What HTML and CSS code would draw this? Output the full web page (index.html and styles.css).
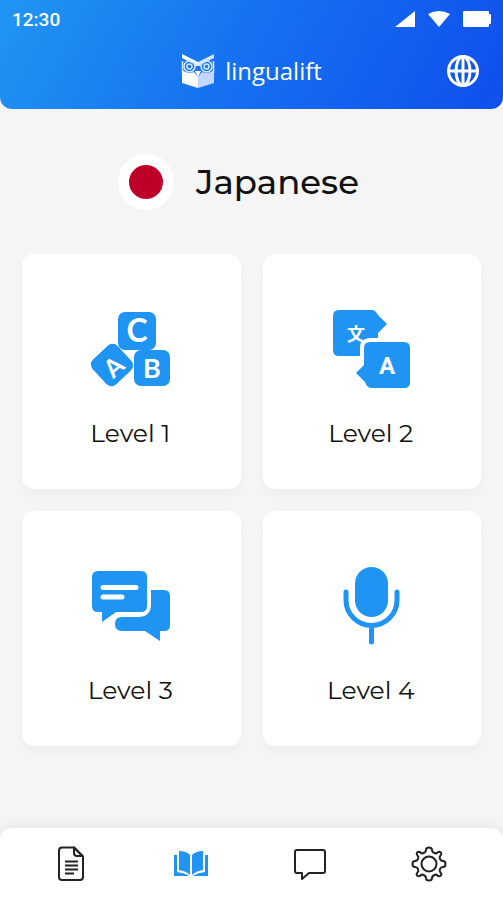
FILE: index.html
```html
<!DOCTYPE html>
<html lang="en">
  <head>
    <meta charset="UTF-8" />
    <meta name="viewport" content="width=device-width, initial-scale=1.0" />
    <title>LinguaLift</title>
    <link rel="stylesheet" href="styles.css">
  </head>
  <body>
    <header class="header">
      <div class="status-bar">
        <span class="time">12:30</span>
        <div class="status-icons">
          <svg width="20" height="16" viewBox="0 0 20 16"><path d="M20 0v16H0z" /></svg>
          <svg width="22" height="16" viewBox="0 0 22 16"><path d="M0 3Q11-3 22 3L11 16z" /></svg>
          <svg width="28" height="16" viewBox="0 0 28 16"><path d="M1 0h24q1 0 1 1v2h1q1 0 1 1v8q0 1-1 1h-1v2q0 1-1 1H1q-1 0-1-1V1q0-1 1-1z" /></svg>
        </div>
      </div>

      <div class="top-bar">
        <a href="#" class="logo">
          <svg width="34" height="36" viewBox="0 0 34 36">
            <path fill="#fff" d="M1 17q6 5 12 2l4 5v11L1 30z" />
            <path fill="#c3d8ff" d="M33 17q-6 5-12 2l-4 5v11l16-5z" />
            <path fill="#fff" d="M1 1l16 8v4L1 5z" />
            <path fill="#d5e5ff" d="M33 1L17 9v4l16-8z" />
            <g fill="none" stroke="#d5e5ff" stroke-width="1.5">
              <circle cx="8.500" cy="13.500" r="5.500" />
              <circle cx="25.500" cy="13.500" r="5.500" />
              <circle cx="8.500" cy="13.500" r="2.500" />
              <circle cx="25.500" cy="13.500" r="2.500" />
              <path d="M14 13q3-2 6 0M1.500 8v12M32.500 8v12" />
            </g>
            <path fill="#fff" d="M14 18h6l-3 6z" />
          </svg>
          <span>lingualift</span>
        </a>
        <button type="button" class="globe-btn" aria-label="Change language">
          <svg width="32" height="32" viewBox="0 0 32 32">
            <circle cx="16" cy="16" r="14.500" />
            <ellipse cx="16" cy="16" rx="7" ry="14.500" />
            <path d="M2 16h28M16 2v28" />
          </svg>
        </button>
      </div>
    </header>

    <main class="content">
      <div class="language">
        <span class="flag"></span>
        <h1>Japanese</h1>
      </div>

      <div class="levels">
        <a href="#" class="card">
          <svg width="80" height="80" viewBox="0 0 80 80">
            <rect x="28" y="3" width="38" height="38" rx="7" />
            <rect x="44" y="41" width="36" height="36" rx="7" />
            <rect x="5" y="39" width="34" height="34" rx="7" transform="rotate(-43 22 56)" />
            <g class="letter">
              <text x="47" y="33" font-size="32">C</text>
              <text x="62" y="69" font-size="27">B</text>
              <text x="23" y="67" font-size="25" transform="rotate(-42 23 57)">A</text>
            </g>
          </svg>
          <span>Level 1</span>
        </a>

        <a href="#" class="card">
          <svg width="80" height="80" viewBox="0 0 80 80">
            <path d="M8 1h33q3 0 6 5l9 9-9 9v23H8q-6 0-6-6V7q0-6 6-6z" />
            <text class="kanji" x="25" y="32" font-size="18">文</text>
            <path stroke="#fff" stroke-width="8" d="M39 33h34q6 0 6 6v34q0 6-6 6H41q-5 0-7-6l-9-9 8-8V39q0-6 6-6z" />
            <path d="M39 33h34q6 0 6 6v34q0 6-6 6H41q-5 0-7-6l-9-9 8-8V39q0-6 6-6z" />
            <text class="letter-a" x="56" y="65" font-size="24">A</text>
          </svg>
          <span>Level 2</span>
        </a>

        <a href="#" class="card">
          <svg width="80" height="80" viewBox="0 0 80 80">
            <path d="M8 5h43q6 0 6 6v29q0 6-6 6H26L12 56V46H8q-6 0-6-6V11q0-6 6-6z" />
            <path d="M61 24h13q6 0 6 6v29q0 6-6 6h-4v10L55 65H32q-7 0-7-7t7-7h16q13 0 13-13z" />
            <path class="lines" d="M13 21.500h33M13 31h19" />
          </svg>
          <span>Level 3</span>
        </a>

        <a href="#" class="card">
          <svg width="80" height="80" viewBox="0 0 80 80">
            <rect x="24" y="1" width="33" height="50" rx="16.500" />
            <path class="stand" d="M15 26v8a25.500 25.500 0 0 0 51 0v-8M40.500 60v16" />
          </svg>
          <span>Level 4</span>
        </a>
      </div>
    </main>

    <nav class="bottom-nav">
      <a href="#" aria-label="Lessons">
        <svg width="36" height="36" viewBox="0 0 36 36">
          <path d="M8 1.500h12l9 9V31q0 3-3 3H8q-3 0-3-3V4.500q0-3 3-3z" />
          <path d="M20 1.500V7q0 3 3 3h5.500z" />
          <path d="M11 15.500h13M11 19.500h13M11 23.500h13M11 27.500h9" />
        </svg>
      </a>
      <a href="#" class="active" aria-label="Library">
        <svg width="36" height="36" viewBox="0 0 36 36">
          <path d="M6 5q7 0 11 4v20q-4-4-11-5z" />
          <path d="M30 5q-7 0-11 4v20q4-4 11-5z" />
          <path d="M1 9h3v17q8 1 12 4H1z" />
          <path d="M35 9h-3v17q-8 1-12 4h15z" />
        </svg>
      </a>
      <a href="#" aria-label="Messages">
        <svg width="36" height="36" viewBox="0 0 36 36">
          <path d="M5 4h26q2 0 2 2v19q0 2-2 2H17l-7 6V27H5q-2 0-2-2V6q0-2 2-2z" />
        </svg>
      </a>
      <a href="#" aria-label="Settings">
        <svg width="36" height="36" viewBox="0 0 36 36">
          <circle cx="18" cy="18" r="7.500" />
          <path d="M15 4Q15 1.500 18 1.500T21 4Q21 6 23.500 7 25 8 26.500 6.500 28 5 30 6.500 31 8 29.500 9.500 28 11 29 13 30 15 32 15 34.500 15 34.500 18T32 21Q30 21 29 23 28 25 29.500 26.500 31 28 30 29.500 28 31 26.500 29.500 25 28 23.500 29 21 30 21 32 21 34.500 18 34.500T15 32Q15 30 12.500 29 11 28 9.500 29.500 8 31 6 29.500 5 28 6.500 26.500 8 25 7 23 6 21 4 21 1.500 21 1.500 18T4 15Q6 15 7 13 8 11 6.500 9.500 5 8 6 6.500 8 5 9.500 6.500 11 8 12.500 7 15 6 15 4z" />
        </svg>
      </a>
    </nav>
  </body>
</html>
```

FILE: styles.css
```css
* {
  box-sizing: border-box;
  margin: 0;
  padding: 0;
}

body {
  display: flex;
  flex-direction: column;
  min-height: 100vh;
  font-family: "Montserrat", "Inter", sans-serif;
  background-color: #f5f5f5;
  color: #111;
}

a {
  color: inherit;
  text-decoration: none;
}

svg {
  display: block;
}

.header {
  padding: 8px 12px 19px;
  background: linear-gradient(118deg, #2196f3 0%, #1673f0 45%, #104eee 100%);
  border-radius: 0 0 12px 12px;
  color: #fff;
}

.status-bar {
  display: flex;
  justify-content: space-between;
  align-items: center;
  height: 22px;
}

.time {
  font-family: "Roboto", sans-serif;
  font-size: 19px;
  font-weight: 500;
}

.status-icons {
  display: flex;
  gap: 13px;
  fill: #fff;
}

.top-bar {
  display: grid;
  grid-template-columns: 1fr auto 1fr;
  align-items: center;
  padding: 0 12px;
  margin-top: 22px;
}

.logo {
  grid-column: 2;
  display: flex;
  align-items: center;
  gap: 10px;
  font-family: "Open Sans", sans-serif;
  font-size: 24px;
  font-weight: 400;
  line-height: 38px;
}

.globe-btn {
  justify-self: end;
  border: none;
  background: none;
  cursor: pointer;
}

.globe-btn svg {
  fill: none;
  stroke: #fff;
  stroke-width: 3;
}

.content {
  padding: 45px 22px;
}

.language {
  display: flex;
  justify-content: center;
  align-items: center;
  gap: 22px;
  margin-right: 26px;
}

.flag {
  width: 56px;
  height: 56px;
  border: 11px solid #fff;
  border-radius: 50%;
  background-color: #be0029;
}

h1 {
  font-size: 34px;
  font-weight: 500;
  line-height: 44px;
}

.levels {
  display: grid;
  grid-template-columns: 1fr 1fr;
  gap: 22px;
  margin-top: 44px;
}

.card {
  display: flex;
  flex-direction: column;
  align-items: center;
  gap: 28px;
  padding: 55px 14px 40px 12px;
  background-color: #fff;
  border-radius: 12px;
  box-shadow: 0 6px 12px rgba(0, 0, 0, 0.03);
  font-size: 25px;
  line-height: 32px;
}

.card svg {
  fill: #2094f3;
}

.card text {
  fill: #fff;
  text-anchor: middle;
  font-weight: 700;
}

.letter {
  font-family: "Lato", sans-serif;
}

.letter-a {
  font-family: "Roboto", sans-serif;
}

.kanji {
  font-family: "Noto Sans CJK JP", sans-serif;
}

.lines {
  stroke: #fff;
  stroke-width: 5;
  stroke-linecap: round;
}

.stand {
  fill: none;
  stroke: #2094f3;
  stroke-width: 5;
  stroke-linecap: round;
}

.bottom-nav {
  display: flex;
  margin-top: auto;
  padding: 18px 15px 18px 13px;
  background-color: #fff;
  border-radius: 12px 12px 0 0;
  box-shadow: 0 -3px 12px rgba(0, 0, 0, 0.06);
}

.bottom-nav a {
  flex: 1;
  display: flex;
  justify-content: center;
}

.bottom-nav svg {
  fill: none;
  stroke: #222;
  stroke-width: 2;
  stroke-linejoin: round;
}

.bottom-nav .active svg {
  fill: #2094f3;
  stroke: none;
}
```
